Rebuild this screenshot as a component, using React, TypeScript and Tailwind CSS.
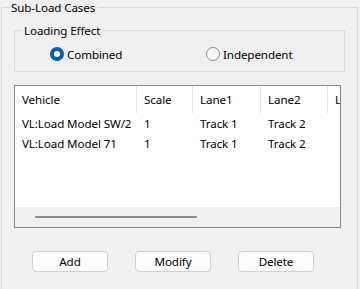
import React from "react";

const font = { fontFamily: '"Noto Sans", "Liberation Sans", sans-serif' };

function Radio({ checked, label }: { checked: boolean; label: string }) {
  return (
    <label className="flex items-center gap-[3px] h-[16px]">
      {checked ? (
        <span className="w-[14px] h-[14px] rounded-full bg-[#005fb8] flex items-center justify-center">
          <span className="w-[6px] h-[6px] rounded-full bg-white" />
        </span>
      ) : (
        <span className="w-[14px] h-[14px] rounded-full border border-[#8a8a8a] bg-[#f7f7f7]" />
      )}
      <span>{label}</span>
    </label>
  );
}

const cols = [
  { name: "Vehicle", w: 122 },
  { name: "Scale", w: 56 },
  { name: "Lane1", w: 68 },
  { name: "Lane2", w: 67 },
  { name: "Lane3", w: 60 },
];

const rows = [
  ["VL:Load Model SW/2", "1", "Track 1", "Track 2", ""],
  ["VL:Load Model 71", "1", "Track 1", "Track 2", ""],
];

export default function App() {
  return (
    <div
      className="w-[360px] h-[289px] bg-[#f0f0f0] overflow-hidden text-[11.6px] tracking-[-0.1px] text-[#000] leading-[15px]"
      style={font}
    >
      <fieldset className="ml-[1px] w-[357px] h-[320px] border border-[#dcdcdc] p-0">
        <legend className="ml-[7px] px-[2px] h-[15px] leading-[15px]">Sub-Load Cases</legend>
        <div className="px-[12px] pt-[8px]">
          <fieldset className="border border-[#dcdcdc] p-0 pb-[9px]">
            <legend className="ml-[7px] px-[2px] h-[15px] leading-[15px]">Loading Effect</legend>
            <div className="flex pt-[8px] pl-[35px]">
              <div className="w-[156px]">
                <Radio checked label="Combined" />
              </div>
              <Radio checked={false} label="Independent" />
            </div>
          </fieldset>

          <div className="mt-[13px] w-[327px] h-[143px] border border-[#828790] bg-white flex flex-col overflow-hidden">
            <div className="flex h-[27px] shrink-0">
              {cols.map((c, i) => (
                <div
                  key={c.name}
                  className={
                    "shrink-0 flex items-center pl-[7px] " +
                    (i < cols.length - 1 ? "border-r border-[#e5e5e5]" : "")
                  }
                  style={{ width: c.w }}
                >
                  {c.name}
                </div>
              ))}
            </div>
            {rows.map((r, ri) => (
              <div key={ri} className="flex h-[20px] shrink-0">
                {r.map((cell, ci) => (
                  <div
                    key={ci}
                    className="shrink-0 flex items-center pl-[7px] whitespace-nowrap"
                    style={{ width: cols[ci].w }}
                  >
                    {cell}
                  </div>
                ))}
              </div>
            ))}
            <div className="flex-1" />
            <div className="h-[20px] shrink-0 bg-[#f0f0f0] flex items-center pl-[20px]">
              <div className="w-[162px] h-[2px] rounded-full bg-[#8a8a8a]" />
            </div>
          </div>

          <div className="mt-[23px] flex gap-[27px] pl-[18px]">
            {["Add", "Modify", "Delete"].map((b) => (
              <button
                key={b}
                className="w-[76px] h-[21px] rounded-[4px] border border-[#d0d0d0] bg-[#fdfdfd] flex items-center justify-center leading-[15px]"
              >
                {b}
              </button>
            ))}
          </div>
        </div>
      </fieldset>
    </div>
  );
}
